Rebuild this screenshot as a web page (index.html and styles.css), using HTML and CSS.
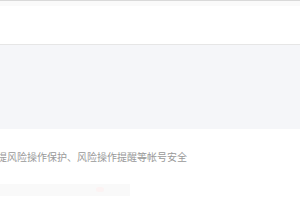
FILE: index.html
```html
<!DOCTYPE html>
<html lang="zh">
<head>
<meta charset="utf-8">
<link rel="stylesheet" href="styles.css">
</head>
<body>
<div class="topline"></div>
<div class="strip"></div>
<div class="header"></div>
<div class="gray"></div>
<div class="content">
  <p class="desc">提风险操作保护、风险操作提醒等帐号安全</p>
  <div class="box"><span class="dot"></span></div>
</div>
</body>
</html>
```
FILE: styles.css
```css
html, body {
  margin: 0;
  padding: 0;
  background: #ffffff;
  width: 300px;
  height: 200px;
  overflow: hidden;
  font-family: "Noto Sans CJK SC", "Noto Sans", sans-serif;
}
.topline {
  height: 1px;
  background: #d9d9d9;
}
.strip {
  height: 5px;
  background: #fafafa;
}
.header {
  height: 38px;
  background: #ffffff;
  border-bottom: 1px solid #e6e6e6;
}
.gray {
  height: 84px;
  background: #f5f6f9;
}
.content {
  padding-top: 21px;
}
.desc {
  margin: 0 0 0 -3px;
  font-size: 10px;
  line-height: 14px;
  color: #999999;
  white-space: nowrap;
}
.box {
  margin-top: 20px;
  width: 130px;
  height: 12px;
  background: #f9f9f9;
  position: relative;
}
.dot {
  position: absolute;
  left: 96px;
  top: 3px;
  width: 8px;
  height: 5px;
  background: #fcf3f3;
  border-radius: 3px;
}
```
